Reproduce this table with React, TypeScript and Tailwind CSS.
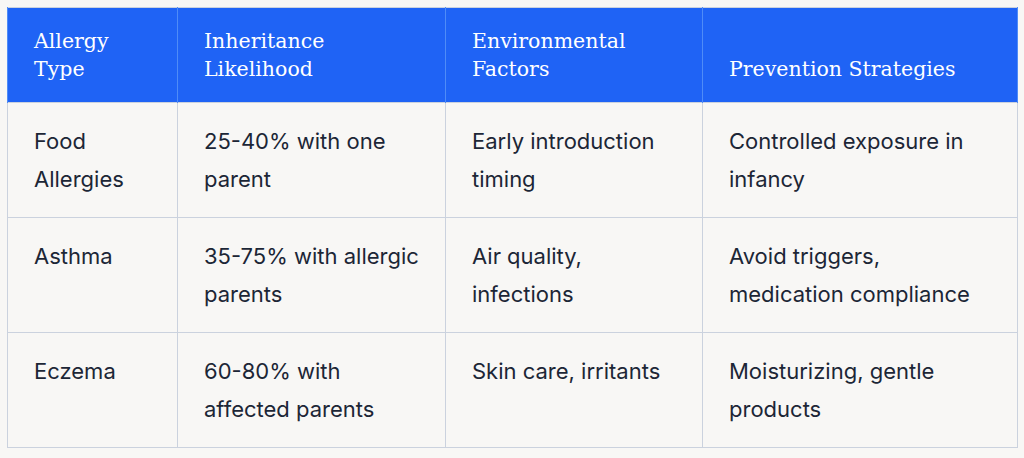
const rows = [
  ["Food Allergies", "25-40% with one parent", "Early introduction timing", "Controlled exposure in infancy"],
  ["Asthma", "35-75% with allergic parents", "Air quality, infections", "Avoid triggers, medication compliance"],
  ["Eczema", "60-80% with affected parents", "Skin care, irritants", "Moisturizing, gentle products"],
];

const headers = ["Allergy Type", "Inheritance Likelihood", "Environmental Factors", "Prevention Strategies"];

export default function App() {
  return (
    <div className="min-h-[458px] w-[1024px] bg-[#f8f7f5] px-[7px] pt-[7px]">
      <table className="w-[1010px] table-fixed border-collapse border border-[#cbd2de] font-['Inter',sans-serif]">
        <colgroup>
          <col className="w-[170px]" />
          <col className="w-[268px]" />
          <col className="w-[257px]" />
          <col className="w-[315px]" />
        </colgroup>
        <thead>
          <tr className="bg-[#1f63f5]">
            {headers.map((h) => (
              <th
                key={h}
                className="h-[95px] border-x border-[#4f8cf7] px-[26px] pb-[19px] text-left align-bottom font-['DejaVu_Serif',serif] text-[20.5px] font-normal leading-[28px] text-white"
              >
                {h}
              </th>
            ))}
          </tr>
        </thead>
        <tbody>
          {rows.map((r) => (
            <tr key={r[0]}>
              {r.map((c, i) => (
                <td
                  key={i}
                  className="h-[115px] border border-[#cbd2de] px-[26px] pt-[19px] align-top text-[22px] leading-[38px] text-[#1c2636]"
                >
                  {c}
                </td>
              ))}
            </tr>
          ))}
        </tbody>
      </table>
    </div>
  );
}
